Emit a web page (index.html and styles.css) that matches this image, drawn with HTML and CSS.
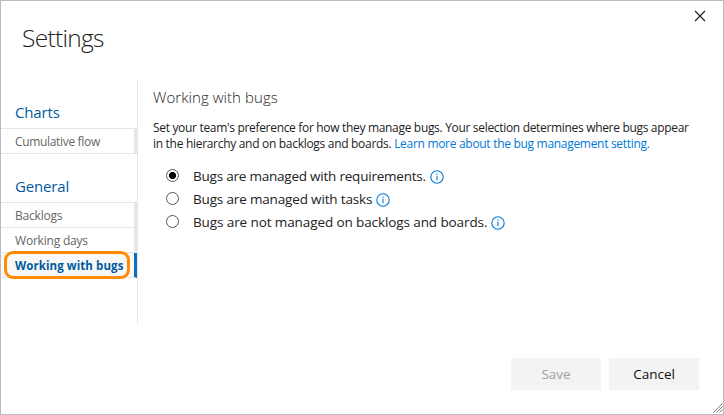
FILE: index.html
```html
<!DOCTYPE html>
<html lang="en">
<head>
<meta charset="utf-8">
<title>Settings</title>
<link rel="stylesheet" href="styles.css">
</head>
<body>
<div class="dialog">
  <header class="header">
    <h1 class="title"><span class="t-title">Settings</span></h1>
    <svg class="close" width="12" height="12" viewBox="0 0 12 12"><path d="M1 1L11 11M11 1L1 11"/></svg>
  </header>
  <div class="body">
    <nav class="nav">
      <h2 class="group"><span class="t-charts">Charts</span></h2>
      <ul class="items">
        <li class="item"><span class="t-flow">Cumulative flow</span></li>
      </ul>
      <h2 class="group"><span class="t-general">General</span></h2>
      <ul class="items">
        <li class="item"><span class="t-backlogs">Backlogs</span></li>
        <li class="item"><span class="t-days">Working days</span></li>
        <li class="item active"><span class="t-bugs">Working with bugs</span><i class="callout"></i></li>
      </ul>
    </nav>
    <main class="content">
      <h2 class="heading"><span class="t-heading">Working with bugs</span></h2>
      <p class="text"><span class="t-line1">Set your team's preference for how they manage bugs. Your selection determines where bugs appear</span><br><span class="t-line2">in the hierarchy and on backlogs and boards. </span><a class="link">Learn more about the bug management setting.</a></p>
      <div class="options">
        <label class="option"><i class="radio checked"></i><span class="t-opt1">Bugs are managed with requirements.</span><svg class="info" width="14" height="14" viewBox="0 0 14 14"><circle cx="7" cy="7" r="6.2"/><path d="M7 5.7V10.2M7 3.6V4.8"/></svg></label>
        <label class="option"><i class="radio"></i><span class="t-opt2">Bugs are managed with tasks</span><svg class="info" width="14" height="14" viewBox="0 0 14 14"><circle cx="7" cy="7" r="6.2"/><path d="M7 5.7V10.2M7 3.6V4.8"/></svg></label>
        <label class="option"><i class="radio"></i><span class="t-opt3">Bugs are not managed on backlogs and boards.</span><svg class="info" width="14" height="14" viewBox="0 0 14 14"><circle cx="7" cy="7" r="6.2"/><path d="M7 5.7V10.2M7 3.6V4.8"/></svg></label>
      </div>
    </main>
  </div>
  <footer class="footer">
    <button class="button disabled"><span class="t-save">Save</span></button>
    <button class="button"><span class="t-cancel">Cancel</span></button>
  </footer>
  <svg class="grip" width="10" height="10" viewBox="0 0 10 10"><path d="M0.5 9.5L9.5 0.5M3.5 9.5L9.5 3.5M6.5 9.5L9.5 6.5"/></svg>
</div>
</body>
</html>
```

FILE: styles.css
```css
* { box-sizing: border-box; }
body { margin: 0; font-family: "Open Sans", "Noto Sans", sans-serif; color: #222; background: #fff; }
h1, h2, p, ul { margin: 0; padding: 0; font-weight: 400; }
span, a { white-space: pre; }
.dialog { position: relative; width: 724px; height: 415px; border: 1px solid #bbb; display: flex; flex-direction: column; }
.header { height: 80px; display: flex; justify-content: space-between; padding: 0 17px 0 21px; }
.title { font-size: 24.5px; font-weight: 300; line-height: 34px; margin-top: 20px; letter-spacing: -0.7px; }
.close { margin-top: 9px; stroke: #222; stroke-width: 1.2; fill: none; }
.body { height: 243px; display: flex; }
.nav { width: 137px; border-right: 1px solid #e6e6e6; padding-top: 17px; }
.group { height: 30px; line-height: 28px; padding-left: 14px; font-size: 15px; color: #005a9e; }
.t-charts, .t-general { letter-spacing: -0.15px; }
.items { list-style: none; border-top: 1px solid #e6e6e6; margin-bottom: 18px; }
.item { position: relative; height: 25px; line-height: 25px; padding-left: 14px; font-size: 12px; color: #666; border-bottom: 1px solid #e6e6e6; border-right: 3px solid #e6e6e6; }
.t-flow { letter-spacing: -0.33px; }
.t-backlogs, .t-days { letter-spacing: -0.2px; }
.t-bugs { font-size: 11.5px; letter-spacing: 0.08px; }
.active { background: #f8f8f8; color: #005a9e; font-weight: 700; border-right: 3px solid #106ebe; }
.callout { position: absolute; left: 3px; top: -2px; width: 126px; height: 28px; border: 3px solid #ff8c00; border-radius: 9px; }
.content { padding: 5px 0 0 15px; }
.heading { font-size: 15px; font-weight: 300; line-height: 22px; letter-spacing: 0.06px; }
.text { margin-top: 12px; font-size: 12px; line-height: 16px; letter-spacing: -0.32px; }
.t-line2 { letter-spacing: -0.3px; }
.link { color: #0078d7; letter-spacing: -0.3px; }
.options { margin-top: 13px; padding-left: 13px; }
.option { display: flex; align-items: center; height: 23px; font-size: 13.5px; line-height: 23px; }
.t-opt1 { letter-spacing: -0.22px; }
.t-opt2 { letter-spacing: -0.16px; }
.t-opt3 { letter-spacing: -0.1px; }
.radio { width: 13px; height: 13px; border: 1px solid #555; border-radius: 50%; margin-right: 14px; margin-top: -2px; }
.checked { background: radial-gradient(circle, #000 3.2px, transparent 3.9px); }
.info { margin-left: 4px; fill: none; stroke: #0078d7; stroke-width: 1.1; }
.footer { display: flex; gap: 8px; padding: 34px 0 0 510px; }
.button { width: 90px; height: 32px; padding: 0; border: 0; background: #f3f3f3; font-family: inherit; font-size: 13.5px; color: #111; }
.disabled { color: #a0a0a0; }
.grip { position: absolute; right: 0; bottom: 1px; stroke: #777; stroke-width: 1; fill: none; }
```
